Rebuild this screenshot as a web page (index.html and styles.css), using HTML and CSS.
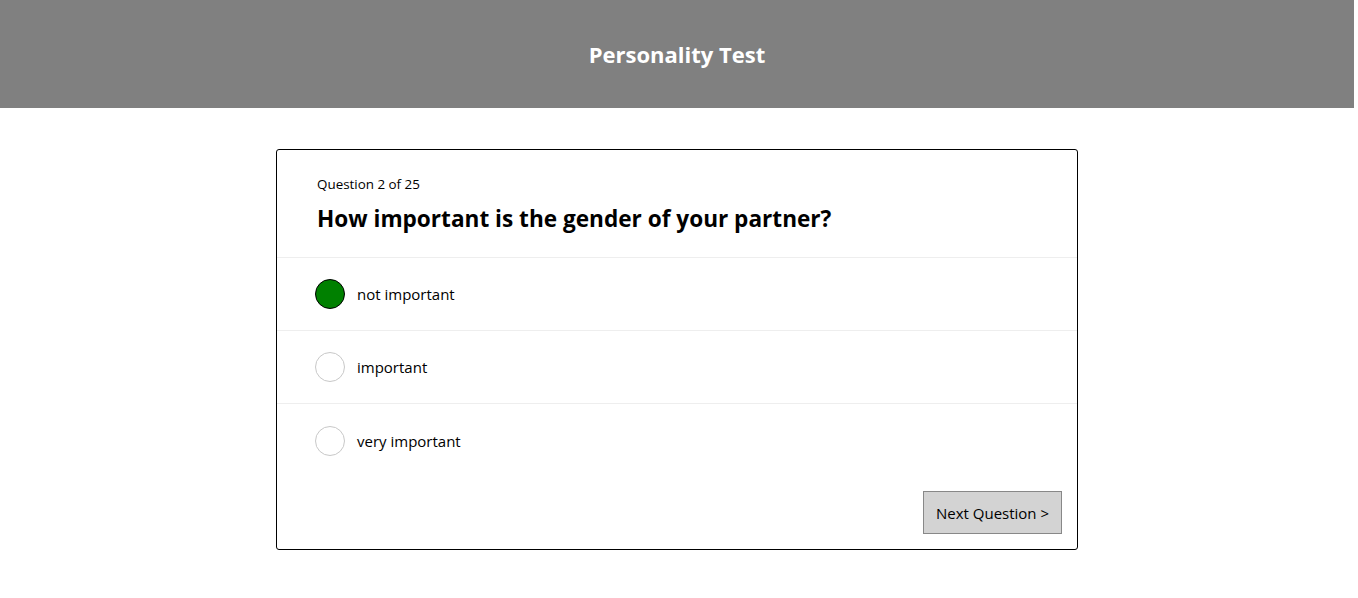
FILE: index.html
```html
<!DOCTYPE html>
<html>
<head>
<meta charset="utf-8">
<link rel="stylesheet" href="styles.css">
</head>
<body>
<div class="page">
  <header class="topbar"><h1 class="title">Personality Test</h1></header>
  <main class="main">
    <section class="card">
      <div class="card-head">
        <div class="counter">Question 2 of 25</div>
        <h2 class="question">How important is the gender of your partner?</h2>
      </div>
      <ul class="options">
        <li class="option"><span class="radio checked"></span><span class="label">not important</span></li>
        <li class="option"><span class="radio"></span><span class="label">important</span></li>
        <li class="option"><span class="radio"></span><span class="label">very important</span></li>
      </ul>
      <div class="actions"><button class="next">Next Question &gt;</button></div>
    </section>
  </main>
</div>
</body>
</html>
```
FILE: styles.css
```css
* { box-sizing: border-box; }
body { margin: 0; font-family: "Open Sans", "Noto Sans", sans-serif; color: #000; background: #fff; }
.page { margin-right: 4px; }
.topbar { background: #808080; height: 108px; display: flex; align-items: center; justify-content: center; }
.title { margin: 0; color: #fff; font-size: 22px; font-weight: 700; }
.main { padding-top: 41px; }
.card { width: 802px; margin: 0 auto; border: 1px solid #000; border-radius: 3px; height: 401px; display: flex; flex-direction: column; }
.card-head { padding: 25px 40px 0 40px; height: 108px; border-bottom: 1px solid #eee; }
.counter { font-size: 13.4px; line-height: 18px; }
.question { margin: 10px 0 0; font-size: 22.6px; line-height: 32px; font-weight: 700; }
.options { list-style: none; margin: 0; padding: 0; }
.option { height: 73px; display: flex; align-items: center; padding-left: 38px; border-bottom: 1px solid #eee; }
.option:last-child { border-bottom: none; }
.radio { width: 30px; height: 30px; border-radius: 50%; border: 1px solid #c8c8c8; background: #fff; margin-right: 12px; }
.radio.checked { background: #008000; border-color: #000; }
.label { font-size: 15px; }
.actions { display: flex; justify-content: flex-end; padding: 14px 15px 0 0; }
.next { font-family: inherit; font-size: 15px; color: #000; background: #d3d3d3; border: 1px solid #888; width: 139px; height: 43px; padding: 0; }
```
